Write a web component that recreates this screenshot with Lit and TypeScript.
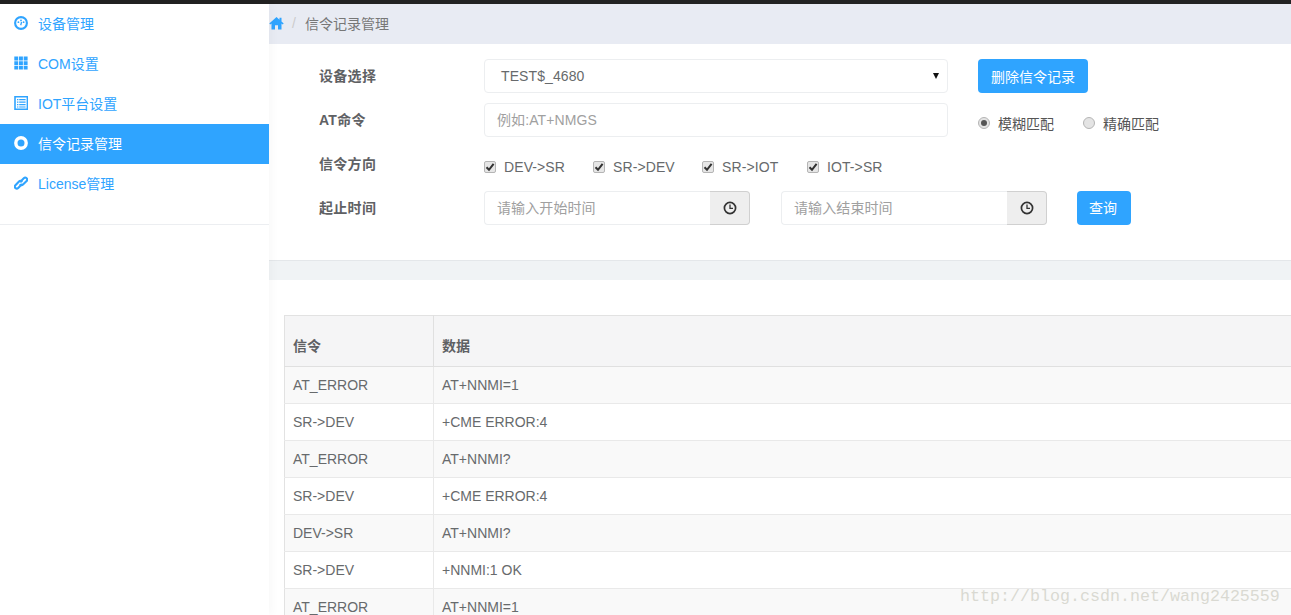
import { LitElement, html, css, svg } from "lit";
import { customElement } from "lit/decorators.js";

const icons = {
  dash: svg`<circle cx="7" cy="7" r="5.9" fill="none" stroke="currentColor" stroke-width="2.1"/><circle cx="4.4" cy="6.2" r=".9" fill="currentColor"/><circle cx="7" cy="4.4" r=".9" fill="currentColor"/><circle cx="9.6" cy="6.2" r=".9" fill="currentColor"/><path d="M6.7 9.2 7.6 6" stroke="currentColor" stroke-width="1.3"/>`,
  grid: svg`<path d="M.3.5h3.9v4H.3zM5 .5h3.9v4H5zM9.7.5h3.9v4H9.7zM.3 5.3h3.9v3.6H.3zM5 5.3h3.9v3.6H5zM9.7 5.3h3.9v3.6H9.7zM.3 9.7h3.9v3.8H.3zM5 9.7h3.9v3.8H5zM9.7 9.7h3.9v3.8H9.7z" fill="currentColor"/>`,
  list: svg`<path d="M1 .8h12.4v12.6H1z" fill="none" stroke="currentColor" stroke-width="1.6"/><path d="M3 3h1.4v1.2H3zM5.2 3h6.4v1.2H5.2zM3 5.5h1.4v1.2H3zM5.2 5.5h6.4v1.2H5.2zM3 8h1.4v1.2H3zM5.2 8h6.4v1.2H5.2zM3 10.4h1.4v1.2H3zM5.2 10.4h6.4v1.2H5.2z" fill="currentColor"/>`,
  record: svg`<circle cx="7" cy="7" r="5.2" fill="none" stroke="currentColor" stroke-width="3.4"/>`,
  link: svg`<g fill="none" stroke="currentColor" stroke-width="2.1" stroke-linecap="round"><path d="M6.6 5.4 9.8 2.2a2 2 0 0 1 2.8 0 2 2 0 0 1 0 2.8L9 8.6a2 2 0 0 1-2.6.2"/><path d="M7.6 8.6 4.2 12a2 2 0 0 1-2.8 0 2 2 0 0 1 0-2.8L5 5.6a2 2 0 0 1 2.6-.2"/></g>`,
};

const nav: [keyof typeof icons, string][] = [
  ["dash", "设备管理"],
  ["grid", "COM设置"],
  ["list", "IOT平台设置"],
  ["record", "信令记录管理"],
  ["link", "License管理"],
];

const rows = [
  ["AT_ERROR", "AT+NNMI=1"],
  ["SR->DEV", "+CME ERROR:4"],
  ["AT_ERROR", "AT+NNMI?"],
  ["SR->DEV", "+CME ERROR:4"],
  ["DEV->SR", "AT+NNMI?"],
  ["SR->DEV", "+NNMI:1 OK"],
  ["AT_ERROR", "AT+NNMI=1"],
];

const dirs: [string, number][] = [
  ["DEV->SR", 109],
  ["SR->DEV", 109],
  ["SR->IOT", 105],
  ["IOT->SR", 80],
];

const clock = html`<svg class="clock" viewBox="0 0 14 14" width="14" height="14"><circle cx="7" cy="7" r="5.6" fill="none" stroke="#333" stroke-width="1.7"/><path d="M7 3.6V7.4H10" fill="none" stroke="#333" stroke-width="1.3"/></svg>`;

@customElement("app-root")
export class AppRoot extends LitElement {
  static styles = css`
    :host {
      display: block;
      height: 615px;
      overflow: hidden;
      position: relative;
      background: #fff;
      font-family: "Liberation Sans", "Noto Sans CJK SC", sans-serif;
      font-size: 14px;
      color: #676a6c;
    }
    .topbar { height: 4px; background: #222; }
    .layout { display: flex; height: 611px; }
    .side {
      width: 269px;
      flex: none;
      background: #fff;
      position: relative;
      z-index: 1;
      box-shadow: 2px 0 10px rgba(0, 0, 0, 0.035);
    }
    .menu { height: 220px; border-bottom: 1px solid #eceef1; box-sizing: content-box; }
    .item {
      height: 40px;
      display: flex;
      align-items: center;
      color: #2fa4ff;
      padding-left: 14px;
      gap: 10px;
    }
    .item svg { flex: none; position: relative; top: -1px; }
    .item span { padding-bottom: 2px; }
    .item.on { background: #2fa4ff; color: #fff; }
    .main { flex: 1; min-width: 0; display: flex; flex-direction: column; }
    .crumb {
      height: 40px;
      flex: none;
      background: #e8ebf3;
      display: flex;
      align-items: center;
      color: #777;
      padding-bottom: 2px;
      box-sizing: border-box;
    }
    .home { color: #2fa4ff; }
    .sep { color: #ccc; margin: 0 9px 0 8px; }
    .panel {
      height: 217px;
      flex: none;
      box-sizing: border-box;
      border-bottom: 1px solid #e4e7ea;
      padding: 15px 0 0 50px;
      border-top-left-radius: 2px;
    }
    .line { display: flex; align-items: center; }
    .label {
      width: 165px;
      flex: none;
      font-weight: 700;
      color: #5f6164;
      letter-spacing: 0.3px;
    }
    .ctrl {
      height: 34px;
      box-sizing: border-box;
      border: 1px solid #eceef0;
      border-radius: 4px;
      background: #fff;
      display: flex;
      align-items: center;
      justify-content: space-between;
    }
    .wide { width: 464px; flex: none; }
    .sel { padding: 0 8px 0 16px; color: #676a6c; }
    .sel span { padding-bottom: 1px; letter-spacing: 0.1px; }
    .caret {
      width: 0; height: 0;
      border-left: 3px solid transparent;
      border-right: 3px solid transparent;
      border-top: 6px solid #111;
    }
    .ph { color: #a0a0a0; padding-left: 12px; padding-bottom: 3px; letter-spacing: 0.1px; }
    .btn {
      height: 34px;
      box-sizing: border-box;
      background: #2fa4ff;
      color: #fff;
      border-radius: 4px;
      display: flex;
      align-items: center;
      justify-content: center;
      flex: none;
    }
    .del { width: 110px; margin-left: 30px; }
    .q { width: 54px; margin-left: 30px; padding: 0 2px 2px 0; }
    .r2 { margin-top: 10px; }
    .r3 { margin-top: 13px; height: 34px; }
    .r4 { margin-top: 7px; }
    .line .label { position: relative; top: -1px; }
    .r3 .label { top: -4px; }
    .r4 .label { top: -1px; }
    .radios { display: flex; margin-left: 30px; position: relative; top: 3px; color: #555; }
    .radio { display: flex; align-items: center; gap: 8px; }
    .radio + .radio { margin-left: 29px; }
    .dot {
      width: 12px; height: 12px;
      box-sizing: border-box;
      border-radius: 50%;
      border: 1px solid #b5b5b5;
      background: #e4e4e4;
      display: flex;
      align-items: center;
      justify-content: center;
    }
    .dot.on::after {
      content: "";
      width: 6px; height: 6px;
      border-radius: 50%;
      background: #555;
    }
    .checks { display: flex; position: relative; }
    .check { display: flex; align-items: center; gap: 8px; letter-spacing: 0.1px; }
    .box {
      width: 12px; height: 12px;
      border: 1px solid #b5b5b5;
      border-radius: 2px;
      background: #e6e6e6;
      box-sizing: border-box;
      display: flex;
      align-items: center;
      justify-content: center;
    }
    .time { display: flex; width: 266px; flex: none; }
    .time + .time { margin-left: 31px; }
    .time .ctrl { flex: 1; border-right: none; border-radius: 4px 0 0 4px; }
    .addon {
      width: 40px;
      height: 34px;
      box-sizing: border-box;
      background: #eee;
      border: 1px solid #d0d0d0;
      border-left: none;
      border-radius: 0 4px 4px 0;
      display: flex;
      align-items: center;
      justify-content: center;
    }
    .gap { height: 19px; flex: none; background: #f0f3f5; }
    .tablewrap { flex: 1; padding: 35px 0 0 15px; overflow: hidden; background: #fff; }
    table {
      width: 1100px;
      border-collapse: collapse;
      table-layout: fixed;
      border-left: 1px solid #e2e2e2;
      border-top: 1px solid #e2e2e2;
    }
    th, td {
      text-align: left;
      padding: 0 0 0 8px;
      border-bottom: 1px solid #e9e9e9;
      border-right: 1px solid #e9e9e9;
      box-sizing: border-box;
      font-weight: 400;
    }
    th {
      height: 51px;
      padding-top: 8px;
      font-weight: 700;
      color: #5f6164;
      background: #f5f5f6;
      border-bottom: 1px solid #e0e0e0;
      border-right: 1px solid #e0e0e0;
    }
    td { height: 37px; }
    tr:nth-child(odd) td { background: #f9f9f9; }
    .c1 { width: 149px; }
    .mark {
      position: absolute;
      left: 960px;
      top: 587px;
      font-family: "Liberation Mono", monospace;
      font-size: 16.67px;
      color: #d9d9d2;
      white-space: nowrap;
    }
  `;

  render() {
    return html`
      <div class="topbar"></div>
      <div class="layout">
        <aside class="side">
          <div class="menu">
            ${nav.map(
              ([ic, label]) => html`<div class="item ${label === "信令记录管理" ? "on" : ""}">
                <svg viewBox="0 0 14 14" width="14" height="14">${icons[ic]}</svg>
                <span>${label}</span>
              </div>`
            )}
          </div>
        </aside>
        <main class="main">
          <div class="crumb">
            <svg class="home" viewBox="0 0 15 14" width="15" height="14" fill="currentColor"><path d="M7.5 1 0.3 7.6l1 .9L2.5 7.4V13.5H6V9.2h3v4.3h3.5V7.4l1.2 1.1 1-.9-2.2-2V1.8h-2v1.9z"/></svg>
            <span class="sep">/</span>
            <span>信令记录管理</span>
          </div>
          <section class="panel">
            <div class="line">
              <div class="label">设备选择</div>
              <div class="ctrl wide sel"><span>TEST$_4680</span><i class="caret"></i></div>
              <div class="btn del">删除信令记录</div>
            </div>
            <div class="line r2">
              <div class="label">AT命令</div>
              <div class="ctrl wide"><span class="ph">例如:AT+NMGS</span></div>
              <div class="radios">
                <div class="radio"><i class="dot on"></i>模糊匹配</div>
                <div class="radio"><i class="dot"></i>精确匹配</div>
              </div>
            </div>
            <div class="line r3">
              <div class="label">信令方向</div>
              <div class="checks">
                ${dirs.map(
                  ([t, w]) => html`<div class="check" style="width:${w}px">
                    <i class="box"><svg viewBox="0 0 10 10" width="10" height="10"><path d="M1.5 5.2 4 7.8 8.6 1.8" fill="none" stroke="#333" stroke-width="2"/></svg></i>${t}
                  </div>`
                )}
              </div>
            </div>
            <div class="line r4">
              <div class="label">起止时间</div>
              <div class="time">
                <div class="ctrl"><span class="ph">请输入开始时间</span></div>
                <div class="addon">${clock}</div>
              </div>
              <div class="time">
                <div class="ctrl"><span class="ph">请输入结束时间</span></div>
                <div class="addon">${clock}</div>
              </div>
              <div class="btn q">查询</div>
            </div>
          </section>
          <div class="gap"></div>
          <div class="tablewrap">
            <table>
              <thead>
                <tr><th class="c1">信令</th><th>数据</th></tr>
              </thead>
              <tbody>
                ${rows.map(([a, b]) => html`<tr><td>${a}</td><td>${b}</td></tr>`)}
              </tbody>
            </table>
          </div>
        </main>
      </div>
      <div class="mark">http://blog.csdn.net/wang2425559</div>
    `;
  }
}
